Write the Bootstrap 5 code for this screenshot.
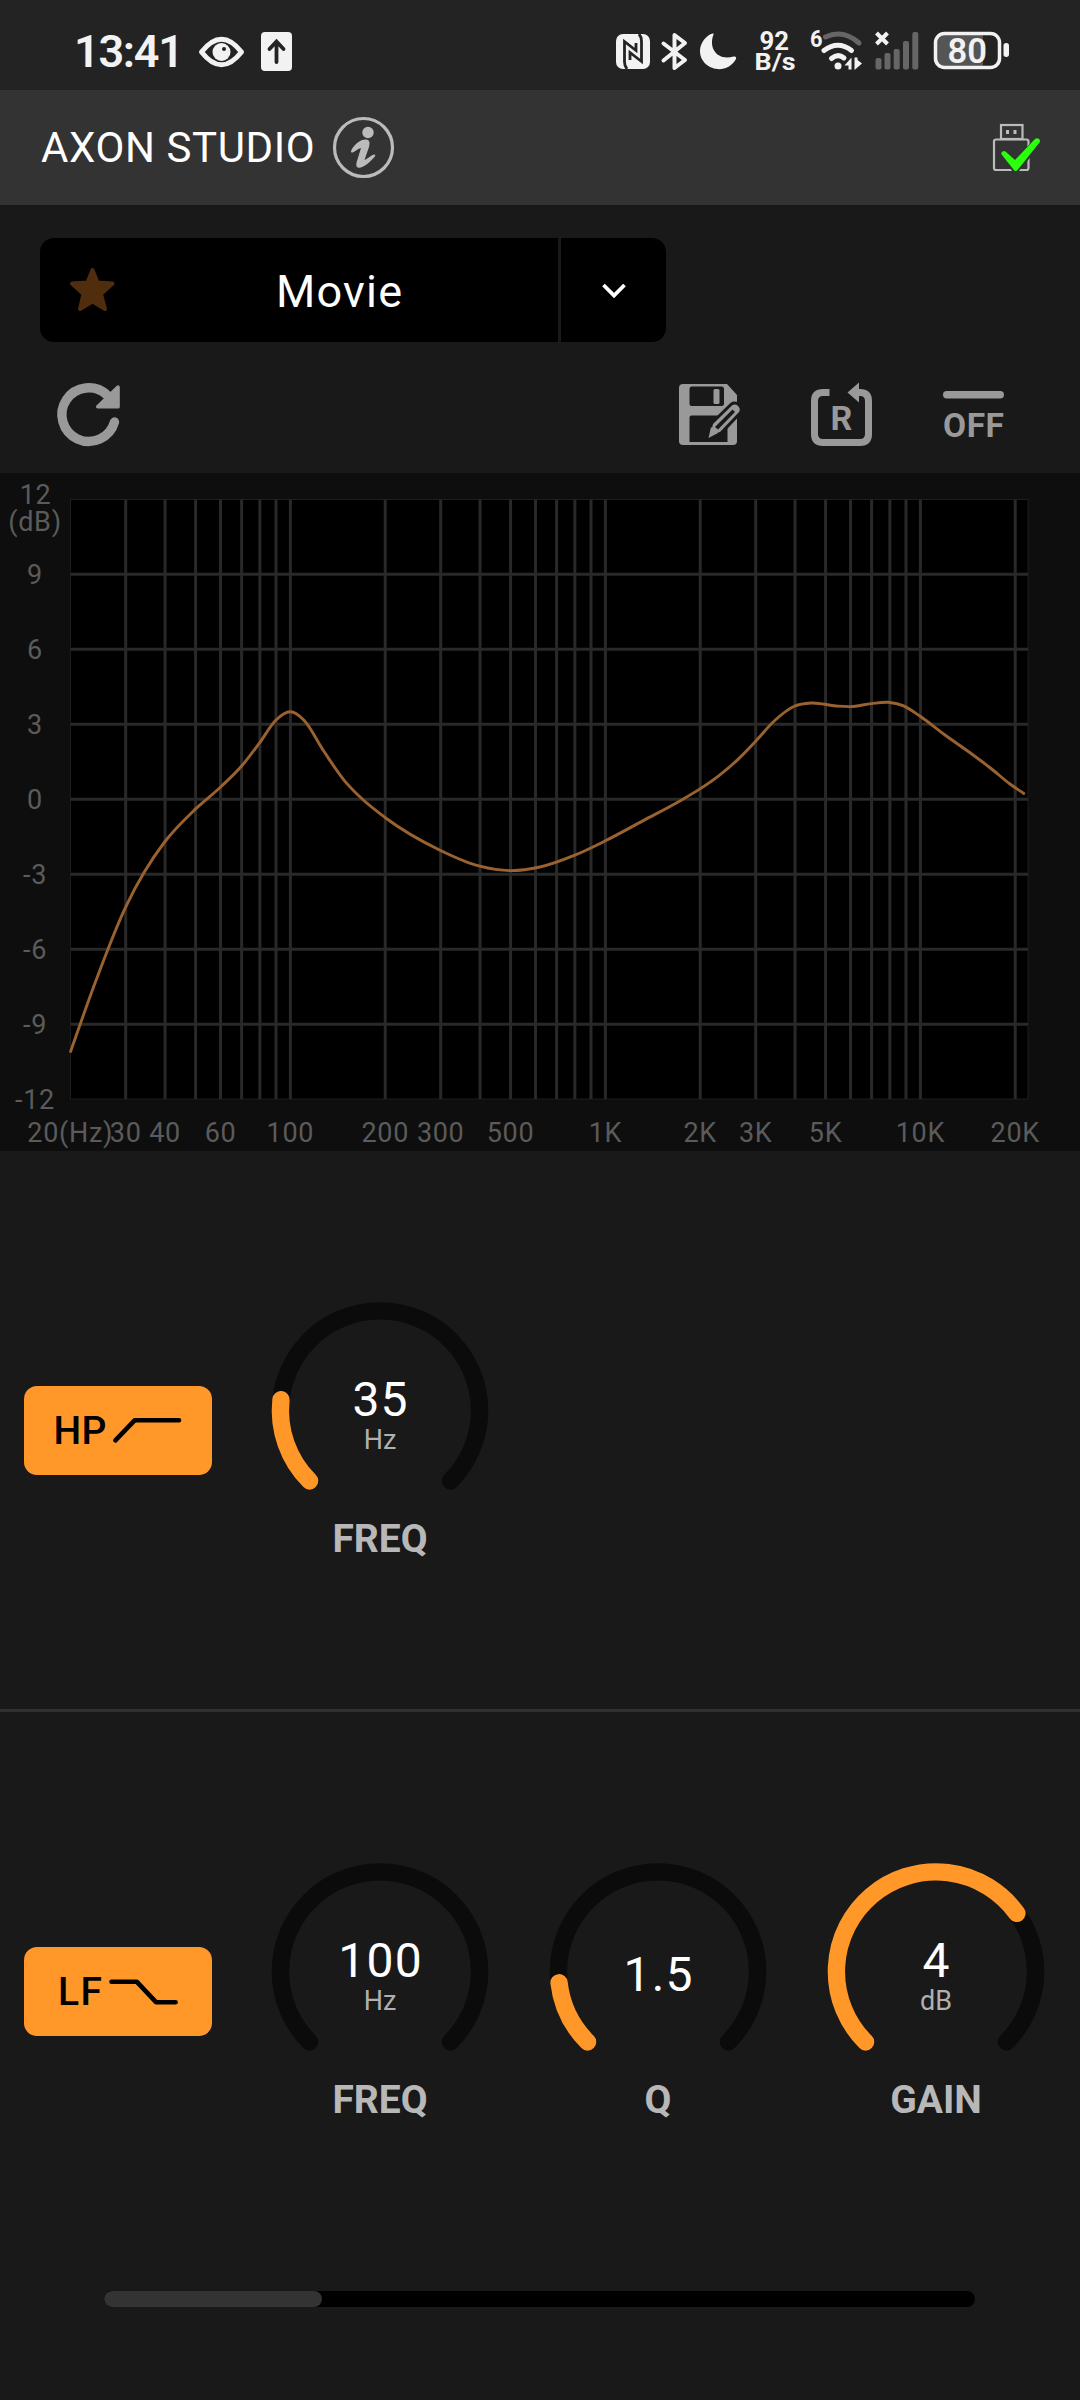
<!DOCTYPE html>
<html lang="en" data-bs-theme="dark">
<head>
<meta charset="utf-8">
<meta name="viewport" content="width=device-width, initial-scale=1">
<title>AXON STUDIO</title>
<link href="https://cdn.jsdelivr.net/npm/bootstrap@5.3.0/dist/css/bootstrap.min.css" rel="stylesheet">
<style>
  body{background:#191919;color:#fff;font-family:Roboto,"Liberation Sans",sans-serif;width:1080px;height:2400px;overflow:hidden}
  svg{display:block;flex:none}
  .sysbar{height:90px;background:#232323;padding-left:68px;padding-right:64px}
  .topbar{height:115px;background:#333;padding:0 36px 0 41px}
  .app-name{font-size:42px;letter-spacing:.6px;line-height:1;width:285px;white-space:nowrap}
  .preset-zone{height:268px;padding:33px 40px 0 40px}
  .preset{width:626px;height:104px;gap:3px}
  .preset .btn{background:#000;border:0;border-radius:0;padding:0;color:#fff}
  .preset .pick{width:518px;border-radius:14px 0 0 14px}
  .preset .more{width:105px;border-radius:0 14px 14px 0}
  .preset-name{font-size:45px;letter-spacing:1.2px;line-height:1;padding:2px 0 0 160px}
  .tools{height:131px;margin:0 -40px}
  .plot{background:#0e0e0e;height:678px}
  .plot text{font-size:27px;letter-spacing:.7px;fill:#5b5b5b}
  .band{height:558px;padding-left:24px}
  .band-line{height:3px;background:#303030}
  .band-btn{width:188px;height:89px;background:#ff9829;border:0;border-radius:13px;padding:0}
  .band-btn text{font-size:39px;font-weight:500;fill:#000}
  .knobs{margin-left:29px}
  .knob{width:278px;height:262px}
  .knob-value{font-size:48px;letter-spacing:1.2px;fill:#fff}
  .knob-unit{font-size:27px;fill:#b0b0b0}
  .knob-name{font-size:39px;font-weight:700;color:#b8b8b8;line-height:46px;padding-top:7px}
  .scroller{width:871px;height:16px;border-radius:8px;background:#000;margin:21px 0 0 104px}
  .scroller .progress-bar{background:#333;border-radius:8px}
</style>
</head>
<body>
<header class="sysbar d-flex justify-content-between">
  <div class="d-flex">
    <svg width="127" height="90" viewBox="68 0 127 90"><text x="74" y="67" font-size="45" font-weight="600" fill="#f2f2f2" textLength="110">13:41</text></svg>
    <svg width="55" height="90" viewBox="195 0 55 90" fill="none"><path d="M201.500 52Q221.500 26.500 241.500 52Q221.500 77.500 201.500 52Z" stroke="#f2f2f2" stroke-width="5" stroke-linejoin="round"/><circle cx="221.500" cy="52" r="9" fill="#f2f2f2"/><circle cx="224" cy="49" r="2" fill="#232323"/></svg>
    <svg width="50" height="90" viewBox="250 0 50 90"><rect x="261" y="32" width="31" height="39" rx="4" fill="#f2f2f2"/><path d="M276.500 62V43M269.500 49L276.500 41.500L283.500 49" fill="none" stroke="#232323" stroke-width="3.800" stroke-linecap="round"/></svg>
  </div>
  <div class="d-flex">
    <svg width="44" height="90" viewBox="612 0 44 90"><rect x="616" y="34" width="34" height="35" rx="7" fill="#f2f2f2"/><path d="M627 69Q624.500 66 624.500 62V41.500L636 50.500V43M639 34Q641.500 37 641.500 41V61.500L630 52.500V60" fill="none" stroke="#232323" stroke-width="2.800"/></svg>
    <svg width="38" height="90" viewBox="656 0 38 90" fill="none" stroke="#f2f2f2" stroke-width="4" stroke-linecap="round" stroke-linejoin="round"><path d="M663.500 43.500L685 60L674.500 68V35L685 43L663.500 60.500"/></svg>
    <svg width="50" height="90" viewBox="694 0 50 90"><path d="M713.500 34.500C708 49 718 61 733.500 56.500C736 56 736.500 57.500 736 59C726 77 700 69 700 51C700 43 706 36 711 34C713 33 714 33.500 713.500 34.500Z" fill="#f2f2f2"/></svg>
    <svg width="62" height="90" viewBox="744 0 62 90" font-weight="700" fill="#f2f2f2"><text x="759.500" y="50" font-size="25" textLength="29.500" lengthAdjust="spacingAndGlyphs">92</text><text x="754.500" y="70" font-size="24" textLength="41" lengthAdjust="spacingAndGlyphs">B/s</text></svg>
    <svg width="62" height="90" viewBox="806 0 62 90" fill="none" stroke="#f2f2f2" stroke-width="5" stroke-linecap="round"><text x="810" y="46.500" font-size="23" font-weight="700" fill="#f2f2f2" stroke="none" textLength="12.500" lengthAdjust="spacingAndGlyphs">6</text><path d="M825.500 37Q843 29 859 43" stroke="#666"/><path d="M824 50.500Q838 40 851.500 50.500M831.500 58.500Q838 53 844 58"/><circle cx="838" cy="66" r="3.500" fill="#f2f2f2" stroke="none"/><path d="M851.500 57.500V69.500H848.500V65.500H844.500ZM854.500 57.500H857.500V60L862 63.500L854.500 70Z" fill="#f2f2f2" stroke="none"/></svg>
    <svg width="60" height="90" viewBox="868 0 60 90" fill="#666"><rect x="875.500" y="58" width="6" height="11.500" rx="2"/><rect x="884.500" y="53" width="6" height="16.500" rx="2"/><rect x="893.700" y="49" width="6" height="20.500" rx="2"/><rect x="903" y="41" width="6" height="28.500" rx="2"/><rect x="912.300" y="32" width="6" height="37.500" rx="2"/><path d="M876.500 33L887.500 44M887.500 33L876.500 44" stroke="#f2f2f2" stroke-width="4"/></svg>
    <svg width="88" height="90" viewBox="928 0 88 90"><path d="M944 34H983V67H944Q936 67 936 59V42Q936 34 944 34Z" fill="#555"/><rect x="935.500" y="33.500" width="64" height="34" rx="9" fill="none" stroke="#f2f2f2" stroke-width="3.500"/><rect x="1003.500" y="43" width="5.500" height="14" rx="2.700" fill="#f2f2f2"/><text x="947.500" y="63" font-size="35" font-weight="600" fill="#f2f2f2" textLength="39.500" lengthAdjust="spacingAndGlyphs">80</text></svg>
  </div>
</header>

<nav class="topbar d-flex align-items-center">
  <span class="app-name">AXON STUDIO</span>
  <svg class="me-auto" width="80" height="115" viewBox="326 90 80 115"><circle cx="363.500" cy="147.500" r="29" fill="none" stroke="#bbb" stroke-width="3.200"/><g fill="#bbb"><circle cx="368" cy="132.500" r="5.700"/><path d="M351 151C354 144 361 139 366 139.500C370 140 370 143 369 147L364.500 160C369 158 371 155 374.500 154.500C376 155 375 156.500 374 157.500C369 163 362 169 358 167.500C356 167 356 164 357 161L361 148C357 149 355 152 352.500 152.500C351 152.500 351 152 351 151Z"/></g></svg>
  <svg width="62" height="115" viewBox="982 90 62 115" fill="none"><g stroke="#bbb" stroke-width="2.200"><rect x="1001" y="125" width="21.500" height="14"/><rect x="994" y="139.500" width="34.500" height="30.500" rx="2"/></g><path d="M1006 130h3v4h-3zM1013.500 130h3v4h-3z" fill="#bbb"/><path d="M1004 153L1015.500 168L1038 141" stroke="#333" stroke-width="9"/><path d="M1001.500 152.500Q1003 150 1005.500 151.500L1015 160L1034.500 139.500Q1037 137 1039.500 139.500Q1040.500 141 1039.500 142.500L1018 169.500Q1015.500 172.500 1013.500 169.500L1002 155Q1001 154 1001.500 152.500Z" fill="#2bff0e"/></svg>
</nav>

<section class="preset-zone">
  <div class="preset btn-group d-flex" role="group">
    <button class="btn pick d-flex align-items-center flex-grow-0 flex-shrink-0 m-0" type="button">
      <svg width="76" height="104" viewBox="40 238 76 104"><path d="M92.500 270L97.500 282.500L112.500 283.500L101 294L105 309L92.500 301.500L80 309L83.500 294L72 283.500L87.500 282.500Z" fill="#4f2d0d" stroke="#4f2d0d" stroke-width="4" stroke-linejoin="round"/></svg>
      <span class="preset-name">Movie</span>
    </button>
    <button class="btn more flex-grow-0 flex-shrink-0 m-0" type="button" aria-label="Presets">
      <svg width="105" height="104" viewBox="561 238 105 104"><path d="M603.500 285L614 295.500L624.500 285" fill="none" stroke="#fff" stroke-width="3.800"/></svg>
    </button>
  </div>
  <div class="tools d-flex">
    <svg class="me-auto" width="130" height="131" viewBox="0 342 130 131"><path d="M114.500 422A26.800 26.800 0 1 1 107 395" fill="none" stroke="#999" stroke-width="9.400" stroke-linecap="round"/><path d="M119.800 387V407Q119.800 408.500 118 408.500H98Q95 408.500 96.500 405.500L116.500 386Q119 384 119.800 387Z" fill="#999"/></svg>
    <svg width="130" height="131" viewBox="645 342 130 131"><path d="M683 384H727L737 395V441Q737 445 733 445H683Q679 445 679 441V388Q679 384 683 384Z" fill="#999"/><path d="M691.500 386.500H721.500Q724 386.500 724 389V403.500Q724 406 721.500 406H691.500Q689.500 406 689.500 403.500V389Q689.500 386.500 691.500 386.500ZM691.500 415.500H727.500V442H689.500V417.500Q689.500 415.500 691.500 415.500Z" fill="#191919"/><rect x="713.500" y="389" width="6" height="15" rx="1.500" fill="#999"/><path d="M710 435L713 424L732 405.500Q735 403.500 738 406Q741 409 739 412L720 432Z" fill="#999" stroke="#191919" stroke-width="6" paint-order="stroke"/><path d="M715 427L732.500 409.500L735 412L718 429.500Z" fill="#191919"/><path d="M708.500 438L711 427L718 433Z" fill="#999"/></svg>
    <svg width="130" height="131" viewBox="775 342 130 131"><path d="M829.500 392.500H823Q814.500 392.500 814.500 401V434Q814.500 442.500 823 442.500H860Q868.500 442.500 868.500 434V401Q868.500 392.500 860 392.500H856" fill="none" stroke="#999" stroke-width="7"/><path d="M847.500 392.500L859 382.500V402.500Z" fill="#999"/><text x="841.500" y="429.500" text-anchor="middle" font-size="34" font-weight="700" fill="#999">R</text></svg>
    <svg width="175" height="131" viewBox="905 342 175 131"><rect x="943" y="391" width="61" height="7.500" rx="3.700" fill="#999"/><text x="943" y="437" font-size="33.500" font-weight="700" fill="#999" textLength="61">OFF</text></svg>
  </div>
</section>

<section class="plot">
  <svg id="response" width="1080" height="678" viewBox="0 473 1080 678"></svg>
</section>

<section class="band d-flex align-items-center">
  <button class="btn band-btn" type="button"><svg width="188" height="89" viewBox="24 1386 188 89"><text x="53.500" y="1444" textLength="53">HP</text><path d="M115.400 1440.300L134.600 1420.300H179" fill="none" stroke="#000" stroke-width="4.600" stroke-linecap="round" stroke-linejoin="round"/></svg></button>
  <div class="knobs d-flex" id="hp-knobs"></div>
</section>
<div class="band-line"></div>
<section class="band d-flex align-items-center">
  <button class="btn band-btn" type="button"><svg width="188" height="89" viewBox="24 1947.500 188 89"><text x="58" y="2005" textLength="44">LF</text><path d="M111.500 1982.200H136.700L156 2002.700H175.600" fill="none" stroke="#000" stroke-width="4.600" stroke-linecap="round" stroke-linejoin="round"/></svg></button>
  <div class="knobs d-flex" id="lf-knobs"></div>
</section>
<div class="progress scroller"><div class="progress-bar" style="width:25%"></div></div>

<script src="https://cdn.jsdelivr.net/npm/bootstrap@5.3.0/dist/js/bootstrap.bundle.min.js"></script>
<script>
  // Frequency response plot: logarithmic Hz axis, linear dB axis
  const LEFT = 70.5, RIGHT = 1028, TOP = 499.500, BOTTOM = 1099;
  const fx = f => 290.400 + 315 * Math.log10(f / 100);
  const dy = db => 799.300 - db * 25;
  let g = `<rect x="${LEFT}" y="${TOP}" width="${RIGHT-LEFT}" height="${BOTTOM-TOP}" fill="#000" stroke="#1d1d1d"/><g stroke="#292929" stroke-width="3">`;
  for (const d of [10, 100, 1000, 10000])
    for (let m = 1; m < 10; m++) {
      const f = d * m;
      if (f > 20 && f <= 20000) g += `<path d="M${fx(f)} ${TOP}V${BOTTOM}"/>`;
    }
  for (let db = -9; db <= 9; db += 3) g += `<path d="M${LEFT} ${dy(db)}H${RIGHT}"/>`;
  g += '</g><g text-anchor="middle">';
  for (let db = -12; db <= 9; db += 3) g += `<text x="35" y="${dy(db)+9.500}">${db}</text>`;
  g += '<text x="35.500" y="504">12</text><text x="35" y="531">(dB)</text>';
  for (const [f, t] of [[20,'20(Hz)'],[30,'30'],[40,'40'],[60,'60'],[100,'100'],[200,'200'],[300,'300'],[500,'500'],[1000,'1K'],[2000,'2K'],[3000,'3K'],[5000,'5K'],[10000,'10K'],[20000,'20K']])
    g += `<text x="${fx(f)}" y="1142">${t}</text>`;
  const p = [[70.6,1051.5],[93,988.5],[125.3,907.8],[144,872.6],[164.6,842],[195.6,808.9],[220.4,787.2],[241.4,766.3],[259.6,742.8],[275.8,720.3],[290.3,711.8],[304,720.2],[323.7,751],[344.4,780.6],[359.8,796.8],[385,817.5],[440,850.2],[479.7,866.2],[510.3,870.6],[540,867],[574.8,855.2],[605.4,840.8],[643.3,820.6],[681.2,800.2],[700,788.9],[719,775.6],[738,759.4],[755.6,741.3],[774.2,721],[794.8,706],[811,703],[836.1,706],[850.3,706.6],[871.3,703.6],[888,702.3],[903,705.6],[920.5,716.5],[945,735],[970.4,753],[991,768.5],[1010,784],[1023.8,793.5]];
  // Cubic Hermite segments; slopes weigh both neighbours by their distance
  const s = p.slice(1).map((q, i) => (q[1] - p[i][1]) / (q[0] - p[i][0]));
  const m = p.map((q, i) => {
    if (i === 0) return s[0];
    if (i === p.length - 1) return s[i-1];
    const h0 = q[0] - p[i-1][0], h1 = p[i+1][0] - q[0];
    return (s[i-1] * h1 + s[i] * h0) / (h0 + h1);
  });
  let d = `M${p[0]}`;
  for (let i = 0; i < p.length - 1; i++) {
    const h = (p[i+1][0] - p[i][0]) / 3;
    d += `C${p[i][0]+h} ${p[i][1]+h*m[i]} ${p[i+1][0]-h} ${p[i+1][1]-h*m[i+1]} ${p[i+1]}`;
  }
  g += `</g><path d="${d}" fill="none" stroke="#9a6230" stroke-width="2.900" stroke-linecap="round"/>`;
  document.getElementById('response').innerHTML = g;

  // Rotary knobs: 270 degree track starting at the lower left
  const R = 99.6;
  const at = deg => [R * Math.sin(deg * Math.PI / 180), -R * Math.cos(deg * Math.PI / 180)];
  const arc = (to, col) => `<path d="M${at(-135)}A${R} ${R} 0 ${to + 135 > 180 ? 1 : 0} 1 ${at(to)}" fill="none" stroke="${col}" stroke-width="17.400" stroke-linecap="round"/>`;
  const knob = (value, unit, name, to) => `<div class="knob d-flex flex-column align-items-center">
    <svg width="278" height="210" viewBox="-139 -111.500 278 210">${arc(135, '#0b0b0b')}${to === null ? '' : arc(to, '#ff9829')}
    <text class="knob-value" x=".6" y="${unit ? 5.5 : 19.5}" text-anchor="middle">${value}</text>
    <text class="knob-unit" y="38.500" text-anchor="middle">${unit}</text></svg>
    <div class="knob-name">${name}</div></div>`;
  document.getElementById('hp-knobs').innerHTML = knob('35', 'Hz', 'FREQ', -83.800);
  document.getElementById('lf-knobs').innerHTML = knob('100', 'Hz', 'FREQ', null) + knob('1.5', '', 'Q', -96.500) + knob('4', 'dB', 'GAIN', 54.300);
</script>
</body>
</html>
